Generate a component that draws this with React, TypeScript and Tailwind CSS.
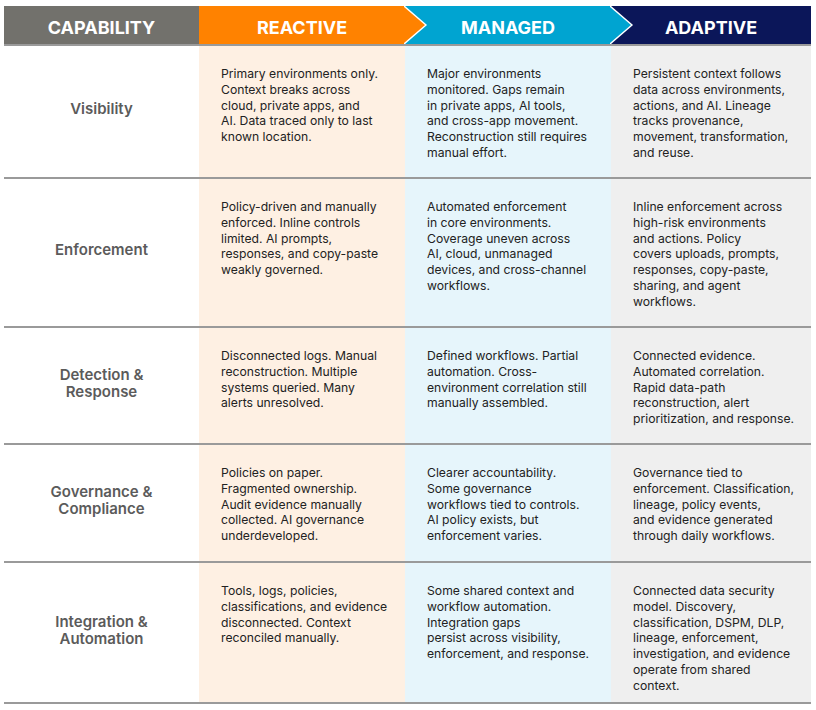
import React from 'react';

interface Stage {
  label: string;
  width: string;
  head: string;
  body: string;
  arrow?: string;
}

interface Row {
  capability: string[];
  height: string;
  cells: string[][];
}

const stages: Stage[] = [
  { label: 'REACTIVE', width: 'w-[206px]', head: 'bg-[#ff8200]', body: 'bg-[#fef0e3]', arrow: '#ff8200' },
  { label: 'MANAGED', width: 'w-[206px]', head: 'bg-[#00a4d1]', body: 'bg-[#e6f5fb]', arrow: '#00a4d1' },
  { label: 'ADAPTIVE', width: 'w-[200px]', head: 'bg-[#0b1659]', body: 'bg-[#efefef]' },
];

const rows: Row[] = [
  {
    capability: ['Visibility'],
    height: 'h-[133px]',
    cells: [
      ['Primary environments only.', 'Context breaks across', 'cloud, private apps, and', 'AI. Data traced only to last', 'known location.'],
      ['Major environments', 'monitored. Gaps remain', 'in private apps, AI tools,', 'and cross-app movement.', 'Reconstruction still requires', 'manual effort.'],
      ['Persistent context follows', 'data across environments,', 'actions, and AI. Lineage', 'tracks provenance,', 'movement, transformation,', 'and reuse.'],
    ],
  },
  {
    capability: ['Enforcement'],
    height: 'h-[149px]',
    cells: [
      ['Policy-driven and manually', 'enforced. Inline controls', 'limited. AI prompts,', 'responses, and copy-paste', 'weakly governed.'],
      ['Automated enforcement', 'in core environments.', 'Coverage uneven across', 'AI, cloud, unmanaged', 'devices, and cross-channel', 'workflows.'],
      ['Inline enforcement across', 'high-risk environments', 'and actions. Policy', 'covers uploads, prompts,', 'responses, copy-paste,', 'sharing, and agent', 'workflows.'],
    ],
  },
  {
    capability: ['Detection &', 'Response'],
    height: 'h-[117px]',
    cells: [
      ['Disconnected logs. Manual', 'reconstruction. Multiple', 'systems queried. Many', 'alerts unresolved.'],
      ['Defined workflows. Partial', 'automation. Cross-', 'environment correlation still', 'manually assembled.'],
      ['Connected evidence.', 'Automated correlation.', 'Rapid data-path', 'reconstruction, alert', 'prioritization, and response.'],
    ],
  },
  {
    capability: ['Governance &', 'Compliance'],
    height: 'h-[118px]',
    cells: [
      ['Policies on paper.', 'Fragmented ownership.', 'Audit evidence manually', 'collected. AI governance', 'underdeveloped.'],
      ['Clearer accountability.', 'Some governance', 'workflows tied to controls.', 'AI policy exists, but', 'enforcement varies.'],
      ['Governance tied to', 'enforcement. Classification,', 'lineage, policy events,', 'and evidence generated', 'through daily workflows.'],
    ],
  },
  {
    capability: ['Integration &', 'Automation'],
    height: 'h-[141px]',
    cells: [
      ['Tools, logs, policies,', 'classifications, and evidence', 'disconnected. Context', 'reconciled manually.'],
      ['Some shared context and', 'workflow automation.', 'Integration gaps', 'persist across visibility,', 'enforcement, and response.'],
      ['Connected data security', 'model. Discovery,', 'classification, DSPM, DLP,', 'lineage, enforcement,', 'investigation, and evidence', 'operate from shared', 'context.'],
    ],
  },
];

function HeaderArrow({ color }: { color: string }) {
  return (
    <svg
      className="absolute top-0 left-full z-10 -ml-[1px]"
      width="24"
      height="38"
      viewBox="0 0 24 38"
    >
      <polygon points="0,0 22,19 0,38" fill={color} />
      <polyline points="0,0 22,19 0,38" fill="none" stroke="#ffffff" strokeWidth="1.4" />
    </svg>
  );
}

export default function App() {
  return (
    <div className="w-[816px] h-[710px] bg-white pt-[6px] pl-[4px] font-['Inter','Liberation_Sans',sans-serif]">
      <div className="w-[807px]">
        <div className="flex h-[40px] border-b-2 border-[#9a9a9a]">
          <div className="w-[195px] bg-[#72716c] flex items-center justify-center pt-1 text-white text-[18px] font-bold">
            CAPABILITY
          </div>
          {stages.map((stage) => (
            <div
              key={stage.label}
              className={`relative ${stage.width} ${stage.head} flex items-center justify-center pt-1 text-white text-[18px] font-bold`}
            >
              {stage.label}
              {stage.arrow && <HeaderArrow color={stage.arrow} />}
            </div>
          ))}
        </div>

        {rows.map((row) => (
          <div key={row.capability.join(' ')} className={`flex ${row.height} border-b-2 border-[#9a9a9a]`}>
            <div className="w-[195px] flex flex-col items-center justify-center pb-[6px] text-[15px] leading-[17px] font-semibold text-[#5b5b5b]">
              {row.capability.map((line) => (
                <span key={line}>{line}</span>
              ))}
            </div>
            {row.cells.map((lines, i) => (
              <div
                key={stages[i].label}
                className={`${stages[i].width} ${stages[i].body} pt-5 pl-[22px] pr-2 text-[12.2px] leading-[15.75px] text-[#222222]`}
              >
                {lines.map((line) => (
                  <div key={line} className="whitespace-nowrap">
                    {line}
                  </div>
                ))}
              </div>
            ))}
          </div>
        ))}
      </div>
    </div>
  );
}
